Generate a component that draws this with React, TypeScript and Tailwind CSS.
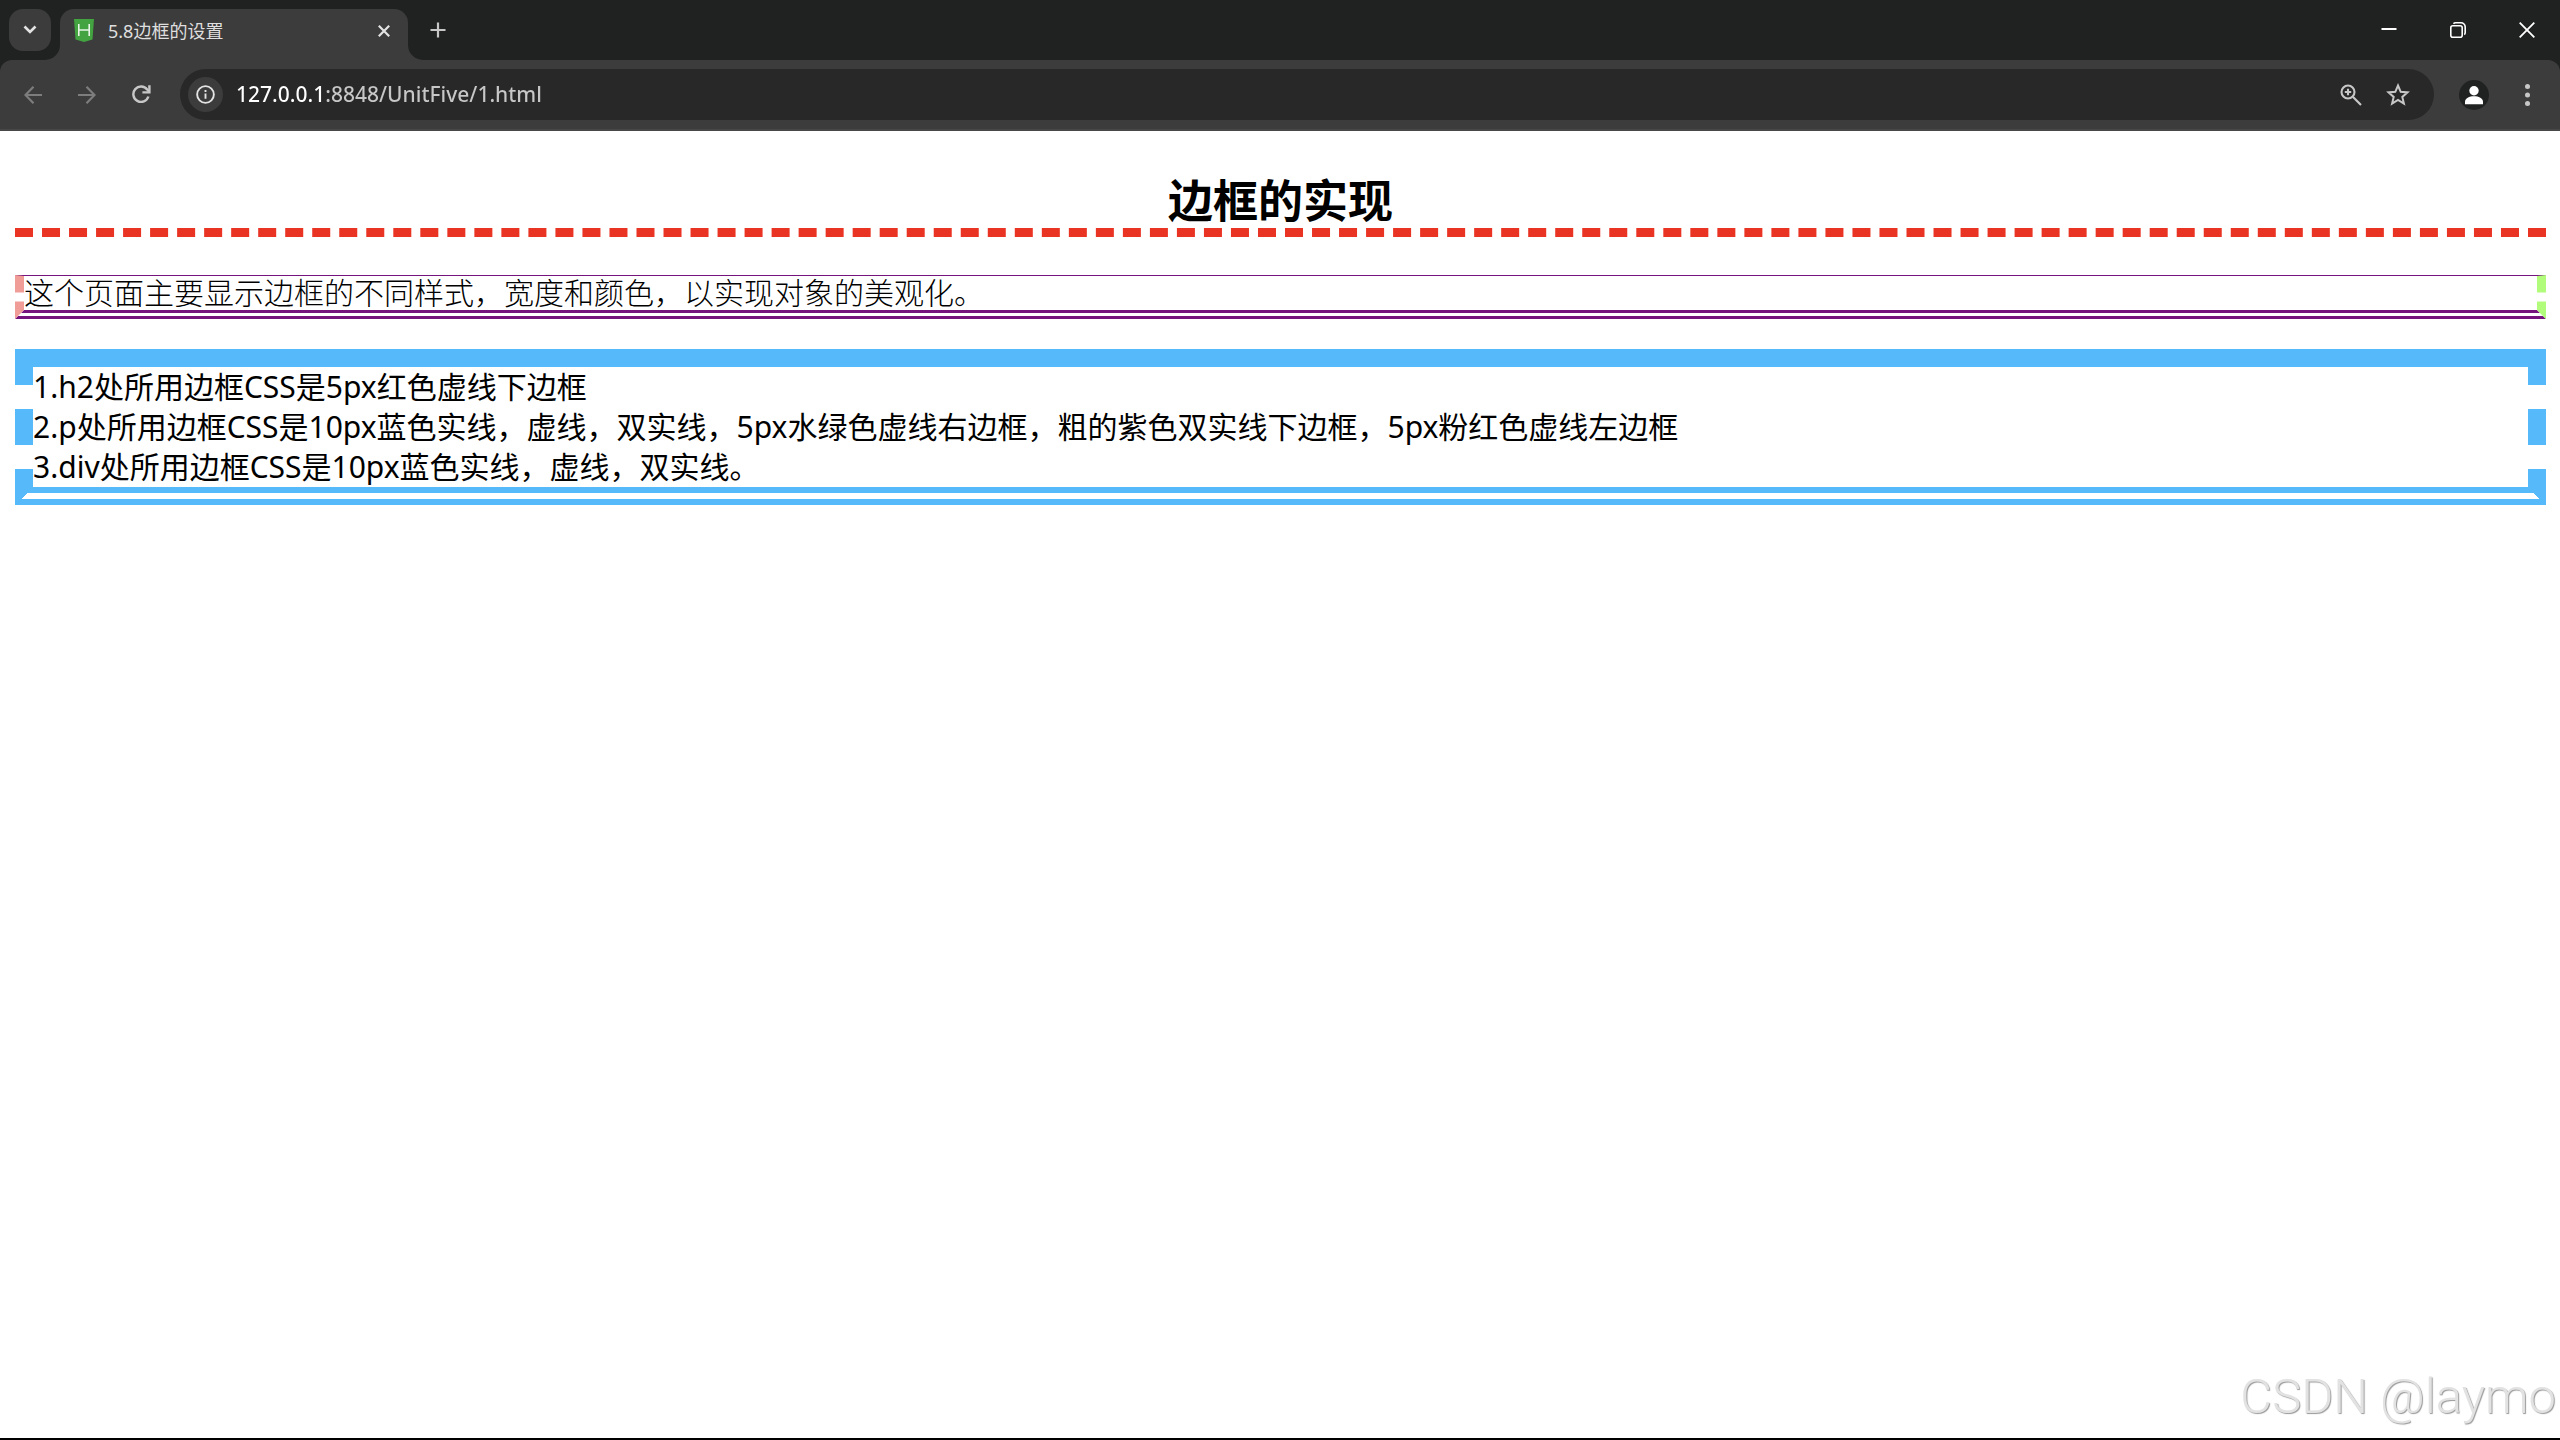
import { useState } from "react";

const notes = [
  "1.h2处所用边框CSS是5px红色虚线下边框",
  "2.p处所用边框CSS是10px蓝色实线，虚线，双实线，5px水绿色虚线右边框，粗的紫色双实线下边框，5px粉红色虚线左边框",
  "3.div处所用边框CSS是10px蓝色实线，虚线，双实线。",
];

function TabStrip() {
  return (
    <div className="flex h-[60px] items-end bg-[#202221]">
      <button aria-label="Search tabs" className="mb-[9px] ml-[9px] flex size-[42px] items-center justify-center rounded-[14px] bg-[#3c3c3c]">
        <svg width="14" height="10" viewBox="0 0 14 10" fill="none" stroke="#e3e3e3" strokeWidth="2.6">
          <path d="M1.5 1.5 7 7l5.500-5.500" />
        </svg>
      </button>

      {/* active tab, with the curved feet on each side */}
      <div className="flex items-end">
        <svg className="-ml-[6px]" width="15" height="15" viewBox="0 0 15 15">
          <path d="M15 0v15H0A15 15 0 0 0 15 0z" fill="#3c3c3c" />
        </svg>
        <div className="flex h-[51px] w-[348px] items-center rounded-t-[14px] bg-[#3c3c3c] pr-[18px] pl-[14px] pb-[8px]">
          <svg width="20" height="23" viewBox="0 0 20 23">
            <path d="M0 0h20l-1.500 20.500L10 23l-8.500-2.500z" fill="#43a340" />
            <path d="M4.800 5v12M15.200 5v12M4.800 11h10.400" fill="none" stroke="#e8f5e7" strokeWidth="1.6" />
          </svg>
          <span className="ml-[14px] flex-1 text-[18px] leading-6 text-[#dfdfdf]">5.8边框的设置</span>
          <button aria-label="Close tab">
            <svg width="12" height="12" viewBox="0 0 12 12" stroke="#e3e3e3" strokeWidth="2.2">
              <path d="M.8.8l10.400 10.400M11.200.8.8 11.200" />
            </svg>
          </button>
        </div>
        <svg width="15" height="15" viewBox="0 0 15 15">
          <path d="M0 0v15h15A15 15 0 0 1 0 0z" fill="#3c3c3c" />
        </svg>
      </div>

      <button aria-label="New tab" className="mb-[22px] ml-[7px]">
        <svg width="16" height="16" viewBox="0 0 16 16" stroke="#c7c7c7" strokeWidth="2.2">
          <path d="M8 .5v15M.5 8h15" />
        </svg>
      </button>

      <div className="mr-[25px] mb-[22px] ml-auto flex gap-[53px]">
        <button aria-label="Minimize">
          <svg width="16" height="16" viewBox="0 0 16 16" stroke="#fff" strokeWidth="2">
            <path d="M.5 7h15" />
          </svg>
        </button>
        <button aria-label="Restore">
          <svg width="16" height="16" viewBox="0 0 16 16" fill="none" stroke="#fff" strokeWidth="1.6">
            <rect x=".8" y="3.800" width="11.400" height="11.400" rx="2" />
            <path d="M3.500 1.800Q4.200.8 5.500.8H11a4.200 4.200 0 0 1 4.200 4.200v5.500q0 1.500-1 2" />
          </svg>
        </button>
        <button aria-label="Close">
          <svg width="16" height="16" viewBox="0 0 16 16" stroke="#fff" strokeWidth="1.8">
            <path d="M.7.700l14.600 14.600M15.300.7.700 15.300" />
          </svg>
        </button>
      </div>
    </div>
  );
}

function Toolbar() {
  const [url, setUrl] = useState("127.0.0.1:8848/UnitFive/1.html");

  return (
    <div className="bg-[#202221]">
      <div className="flex h-[71px] items-center rounded-t-[12px] border-b-2 border-[#474747] bg-[#3c3c3c] pr-[30px] pl-6">
        <div className="flex items-center gap-9">
          <button aria-label="Back" disabled>
            <svg width="18" height="18" viewBox="0 0 18 18" fill="none" stroke="#7d7d7d" strokeWidth="2.2">
              <path d="M18 9H2M9.500.8 1.500 9l8 8.200" />
            </svg>
          </button>
          <button aria-label="Forward" disabled>
            <svg width="18" height="18" viewBox="0 0 18 18" fill="none" stroke="#7d7d7d" strokeWidth="2.2">
              <path d="M0 9h16M8.500.8l8 8.200-8 8.200" />
            </svg>
          </button>
          <button aria-label="Reload">
            <svg width="19" height="19" viewBox="0 0 19 19" fill="none" stroke="#c7c7c7" strokeWidth="2.4">
              <path d="M16.400 11.500A7.700 7.700 0 1 1 15.200 4.500L17 6.500" />
              <path d="M17.400.3v7.100h-7" />
            </svg>
          </button>
        </div>

        <div className="ml-[29px] flex h-[51px] flex-1 items-center rounded-full bg-[#282828] pr-6 pl-2">
          <button aria-label="View site information" className="flex size-[35px] items-center justify-center rounded-full bg-[#3c3c3c]">
            <svg width="19" height="19" viewBox="0 0 20 20" fill="none" stroke="#e3e3e3" strokeWidth="2">
              <circle cx="10" cy="10" r="8.800" />
              <path d="M10 9v5.500M10 5.200v2.200" />
            </svg>
          </button>
          {/* host part is drawn brighter than the rest of the address */}
          <input
            aria-label="Address"
            value={url}
            onChange={(e) => setUrl(e.target.value)}
            spellCheck={false}
            className="ml-[13px] min-w-0 flex-1 bg-[linear-gradient(to_right,#ffffff_88px,#c7c7c7_88px)] bg-clip-text pb-[2px] font-['Noto_Sans','Open_Sans',sans-serif] text-[21px] leading-8 font-medium text-transparent outline-none"
          />
          <div className="flex items-center gap-6">
            <button aria-label="Zoom">
              <svg width="22" height="22" viewBox="0 0 22 22" fill="none" stroke="#c7c7c7" strokeWidth="2.100">
                <circle cx="8" cy="8" r="6.500" />
                <path d="M12.800 12.800 21 21M8 4.800v6.400M4.800 8h6.400" />
              </svg>
            </button>
            <button aria-label="Bookmark this tab">
              <svg width="24" height="23" viewBox="0 0 24 23" fill="none" stroke="#c7c7c7" strokeWidth="2">
                <path d="m12 2.500 2.700 6.300 6.800.6-5.200 4.500 1.600 6.700-5.900-3.600-5.900 3.600 1.600-6.700-5.200-4.500 6.800-.6z" />
              </svg>
            </button>
          </div>
        </div>

        <button aria-label="Profile" className="ml-[25px]">
          <svg width="30" height="30" viewBox="0 0 30 30" fill="#fff">
            <circle cx="15" cy="15" r="15" fill="#202221" />
            <circle cx="15" cy="10.700" r="4.700" />
            <path d="M6 24.200v-2.400c0-3.600 4.300-5.600 9-5.600s9 2 9 5.600v2.400z" />
          </svg>
        </button>
        <button aria-label="Menu" className="ml-9">
          <svg width="5" height="22" viewBox="0 0 5 22" fill="#c7c7c7">
            <circle cx="2.500" cy="2.500" r="2.500" />
            <circle cx="2.500" cy="11" r="2.500" />
            <circle cx="2.500" cy="19.500" r="2.500" />
          </svg>
        </button>
      </div>
    </div>
  );
}

export default function App() {
  return (
    <div className="relative flex min-h-screen flex-col border-b-2 border-black bg-white font-['Noto_Sans','Noto_Sans_CJK_SC',sans-serif]">
      <TabStrip />
      <Toolbar />

      <main className="mr-[14px] ml-[15px] pt-[43px] text-[30px] leading-10 text-black">
        <h2 className="border-b-[9px] border-dashed border-[#e93323] text-center text-[45px] leading-[54px] font-bold">
          边框的实现
        </h2>
        <p className="mt-[38px] border-t border-r-[9px] border-b-[9px] border-l-[9px] border-t-[#75147c] border-r-[#b2fc7c] border-b-[#75147c] border-l-[#f09d97] pb-1 leading-[30px] font-light [border-style:solid_dashed_double_dashed] font-['KaiTi','STKaiti','Noto_Sans_CJK_SC',serif]">
          这个页面主要显示边框的不同样式，宽度和颜色，以实现对象的美观化。
        </p>
        <div className="mt-[30px] border-[18px] border-[#55b9fa] [border-style:solid_dashed_double]">
          {notes.map((n) => (
            <div key={n}>{n}</div>
          ))}
        </div>
      </main>

      <div className="absolute right-1 bottom-[11px] font-['Roboto',sans-serif] text-[49px] leading-[60px] font-light text-[#e2e2e2] [text-shadow:1px_1px_1px_#999999]">
        CSDN @laymo
      </div>
    </div>
  );
}
